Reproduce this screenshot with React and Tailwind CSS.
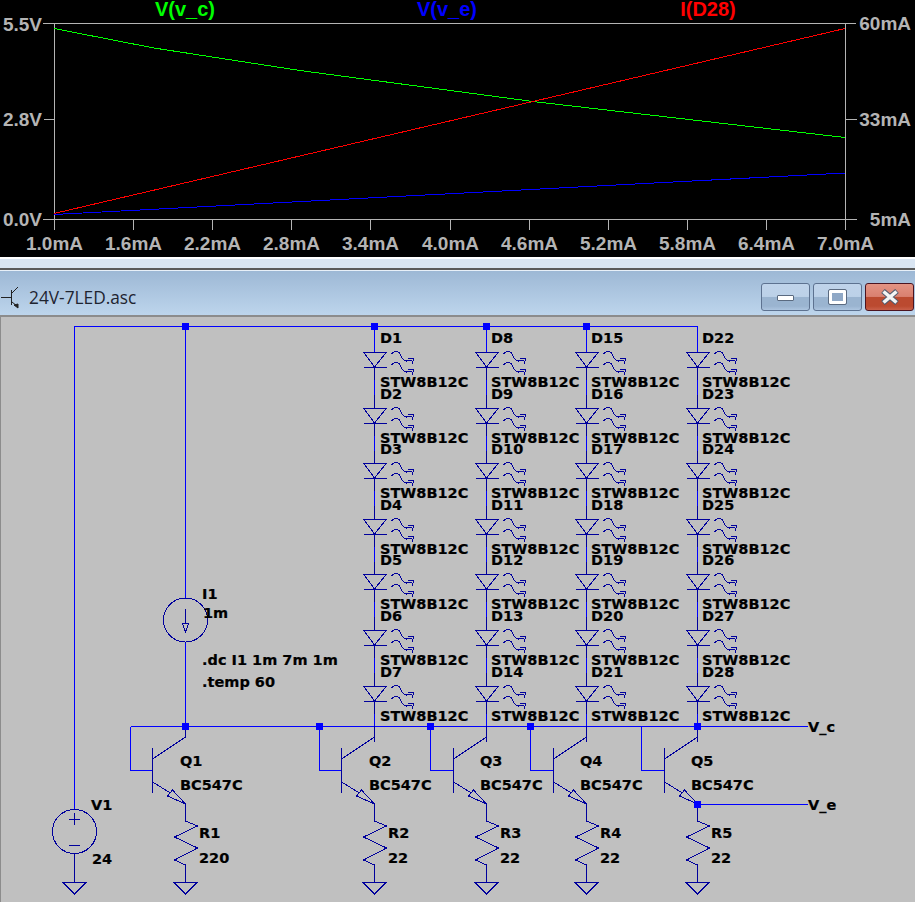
import React from "react";

const W = "#0000ff";
const C = "#00009c";
const G = "#b4b4b4";

const xLabels = ["1.0mA","1.6mA","2.2mA","2.8mA","3.4mA","4.0mA","4.6mA","5.2mA","5.8mA","6.4mA","7.0mA"];
const cols = [374.5, 486.5, 586.5, 697.5];
const colLabelX = [380, 491, 591, 702];
const dStep = 55.6;
const transistors = [
  { n: "Q1", r: "R1", v: "220", x: 185.5, base: 130.5, lx: 180 },
  { n: "Q2", r: "R2", v: "22", x: 374.5, base: 319.5, lx: 369 },
  { n: "Q3", r: "R3", v: "22", x: 486.5, base: 430.5, lx: 480 },
  { n: "Q4", r: "R4", v: "22", x: 586.5, base: 530.5, lx: 580 },
  { n: "Q5", r: "R5", v: "22", x: 697.5, base: 641.5, lx: 691 },
];
const nodes = [
  [185.5, 326.5], [374.5, 326.5], [486.5, 326.5], [586.5, 326.5],
  [185.5, 726.5], [319.5, 726.5], [430.5, 726.5], [530.5, 726.5], [697.5, 726.5], [697.5, 804.5],
];

function PlotLabel({ x, y, align, color, big, children }) {
  const t = align === "c" ? "-50%" : align === "r" ? "-100%" : "0";
  return (
    <span
      className={
        "absolute whitespace-nowrap font-bold font-['Liberation_Sans',Arial,sans-serif] " +
        (big ? "text-[20px] leading-[18px]" : "text-[19px] leading-none")
      }
      style={{ left: x, top: y, transform: `translate(${t},-50%)`, color }}
    >
      {children}
    </span>
  );
}

function Plot() {
  const ticks = xLabels.map((_, i) => Math.round(54 + i * 79.1) + 0.5);
  return (
    <div className="relative h-[257px] bg-black overflow-hidden">
      <svg className="absolute inset-0" width="915" height="257" viewBox="0 0 915 257">
        <g stroke={G} strokeWidth="1" shapeRendering="crispEdges" fill="none">
          <path d="M43 23.5H856M43 219.5H857M44 119.5H54M845 119.5H857" />
          <path d="M54.5 23V230M845.5 23V230" />
          {ticks.slice(1, -1).map((x) => (
            <path key={x} d={`M${x} 219V230`} />
          ))}
        </g>
        <g shapeRendering="crispEdges" fill="none" strokeWidth="1">
          <polyline points="54,28.5 154,48 300,70.5 533,101.5 845,137.5" stroke="#00ff00" />
          <polyline points="54,214.5 845,173" stroke="#0000ff" />
          <polyline points="54,213.5 845,28.5" stroke="#ff0000" />
        </g>
      </svg>
      <PlotLabel big x={185} y={9} align="c" color="#00ff00">V(v_c)</PlotLabel>
      <PlotLabel big x={447} y={9} align="c" color="#0000ff">V(v_e)</PlotLabel>
      <PlotLabel big x={708} y={9} align="c" color="#ff0000">I(D28)</PlotLabel>
      <PlotLabel x={42} y={24} align="r" color={G}>5.5V</PlotLabel>
      <PlotLabel x={42} y={119} align="r" color={G}>2.8V</PlotLabel>
      <PlotLabel x={42} y={219} align="r" color={G}>0.0V</PlotLabel>
      <PlotLabel x={911} y={23} align="r" color={G}>60mA</PlotLabel>
      <PlotLabel x={911} y={119} align="r" color={G}>33mA</PlotLabel>
      <PlotLabel x={911} y={219} align="r" color={G}>5mA</PlotLabel>
      {xLabels.map((t, i) => (
        <PlotLabel key={t} x={ticks[i]} y={243} align="c" color={G}>{t}</PlotLabel>
      ))}
    </div>
  );
}

function WinButton({ kind }) {
  const close = kind === "close";
  return (
    <div
      className={
        "w-[49px] h-[28px] rounded-[3px] border flex items-center justify-center " +
        (close
          ? "border-[#4b1420] bg-[linear-gradient(#e39383_0%,#d98070_48%,#bb4a30_50%,#bb4a30_85%,#c9604a_100%)]"
          : "border-[#5d7290] bg-[linear-gradient(#bfd3ea_0%,#bcd1e8_48%,#9ab4d0_50%,#9ab4d0_85%,#adc5e0_100%)]")
      }
    >
      {kind === "min" && (
        <div className="w-[17px] h-[6px] mt-[2px] bg-white border border-[#5a6a80] rounded-[1px]" />
      )}
      {kind === "max" && (
        <div className="w-[17px] h-[14px] bg-[#8fa8c6] border-[3px] border-white outline outline-1 outline-[#5a6a80] rounded-[1px]" />
      )}
      {close && (
        <svg width="20" height="16" viewBox="0 0 20 16">
          <path d="M3 2L17 14M17 2L3 14" stroke="#4e5a6e" strokeWidth="5.5" />
          <path d="M3.5 2.5L16.5 13.5M16.5 2.5L3.5 13.5" stroke="#f4f4f4" strokeWidth="3.6" />
        </svg>
      )}
    </div>
  );
}

function TitleBar() {
  return (
    <div className="h-[44px] pt-[8px] flex items-center justify-between pr-[1px] bg-[linear-gradient(#9db8d5,#bdd5ec)]">
      <div className="flex items-center">
        <svg className="shrink-0" width="19" height="24" viewBox="0 0 19 24" fill="none" stroke="#222222" strokeWidth="1">
          <path d="M1 12.5H11M11.5 5V20M12 8L18 2M12 17L17 21" />
          <path d="M14 20L18 19L18 23Z" fill="#222222" />
        </svg>
        <span className="ml-[10px] mt-[1px] text-[#1e2430] text-[17.3px] leading-none font-['Open_Sans',sans-serif]">24V-7LED.asc</span>
      </div>
      <div className="flex gap-[3px]">
        <WinButton kind="min" />
        <WinButton kind="max" />
        <WinButton kind="close" />
      </div>
    </div>
  );
}

function Diode({ x, y }) {
  const l = x - 11;
  const r = x + 12;
  return (
    <g fill="none" stroke={C} strokeWidth="1">
      <path d={`M${l} ${y}H${r}L${x} ${y + 15}Z`} />
      <path d={`M${l} ${y + 15.5}H${r}`} />
      <path d={`M${x + 17} ${y + 2}c2 -3 6 -3 8 -1c2 2 2 8 7 8l6 -1M${x + 34} ${y + 6}l5 1l-1 5`} />
      <path d={`M${x + 17} ${y + 13}c2 -3 6 -3 8 -1c2 2 2 8 7 8l6 -1M${x + 34} ${y + 17}l5 1l-1 5`} />
    </g>
  );
}

function Ground({ x, y }) {
  return <path d={`M${x - 12} ${y}H${x + 12}L${x} ${y + 12}Z`} fill="none" stroke={C} strokeWidth="1" />;
}

function Transistor({ x, base }) {
  const b = x - 33;
  return (
    <g fill="none">
      <path d={`M${base} 726.5V770.5H${b}`} stroke={W} strokeWidth="1" />
      <g stroke={C} strokeWidth="1">
        <path d={`M${b} 748V793M${b} 759L${x} 737V726M${b} 782L${x - 15} 793M${x} 804V821`} />
        <path d={`M${x} 804L${x - 18} 796L${x - 13} 790Z`} />
        <path d={`M${x} 821L${x + 12} 826L${x - 11} 837L${x + 12} 848L${x - 11} 860L${x} 865V882`} />
      </g>
      <Ground x={x} y={882} />
    </g>
  );
}

function Schematic() {
  const labels = [
    { t: "V1", x: 91, y: 805 },
    { t: "24", x: 92, y: 859 },
    { t: "I1", x: 202, y: 594 },
    { t: "1m", x: 203, y: 613 },
    { t: ".dc I1 1m 7m 1m", x: 202, y: 660 },
    { t: ".temp 60", x: 202, y: 682 },
    { t: "V_c", x: 808, y: 727 },
    { t: "V_e", x: 808, y: 805 },
  ];
  transistors.forEach((q) => {
    labels.push({ t: q.n, x: q.lx, y: 761 });
    labels.push({ t: "BC547C", x: q.lx, y: 785 });
    labels.push({ t: q.r, x: q.x + 13.5, y: 833 });
    labels.push({ t: q.v, x: q.x + 13.5, y: 858 });
  });
  colLabelX.forEach((x, c) => {
    for (let k = 0; k < 7; k++) {
      labels.push({ t: "D" + (c * 7 + k + 1), x, y: 338 + k * dStep });
      labels.push({ t: "STW8B12C", x, y: 382 + k * dStep });
    }
  });
  return (
    <div className="relative flex-1 bg-[#c0c0c0] border-t-2 border-l border-[#8c8c8c] overflow-hidden">
      <svg className="absolute left-[-1px] top-[-2px]" width="915" height="587" viewBox="0 315 915 587" shapeRendering="crispEdges">
        <g fill="none" stroke={W} strokeWidth="1">
          <path d="M74.5 809V326.5H697.5" />
          <path d="M185.5 326.5V598M185.5 642V726.5" />
          <path d="M130.5 726.5H808M697.5 804.5H808" />
        </g>
        {cols.map((x) => (
          <g key={x}>
            <path d={`M${x} 326V352`} stroke={W} fill="none" />
            {[0, 1, 2, 3, 4, 5, 6].map((k) => {
              const y = Math.round(352 + k * dStep);
              return (
                <g key={k}>
                  <Diode x={x} y={y} />
                  <path d={`M${x} ${y + 15}V${y + 28}`} stroke={C} fill="none" />
                  <path d={`M${x} ${y + 28}V${y + 43}`} stroke={W} fill="none" />
                  <path d={`M${x} ${y + 43}V${y + 56}`} stroke={C} fill="none" />
                </g>
              );
            })}
          </g>
        ))}
        <g fill="none" stroke={C} strokeWidth="1">
          <circle cx="74.5" cy="831.5" r="22" />
          <path d="M74.5 813V825M69 819H80M69 845H80M74.5 854V882" />
          <Ground x={74.5} y={882} />
          <circle cx="185.5" cy="620" r="22" />
          <path d="M185.5 609V623M182.5 623.5H188.5L185.5 632Z" />
        </g>
        {transistors.map((q) => (
          <Transistor key={q.n} x={q.x} base={q.base} />
        ))}
        {nodes.map(([x, y]) => (
          <rect key={x + "-" + y} x={x - 3.5} y={y - 3.5} width="7" height="7" fill={W} />
        ))}
      </svg>
      {labels.map((l) => (
        <span
          key={l.t + l.x + l.y}
          className="absolute whitespace-nowrap text-black font-bold text-[14.5px] leading-none [-webkit-text-stroke:0.2px_#000000] font-['DejaVu_Sans',Verdana,sans-serif]"
          style={{ left: l.x - 1, top: l.y - 317, transform: "translateY(-50%)" }}
        >
          {l.t}
        </span>
      ))}
    </div>
  );
}

export default function App() {
  return (
    <div className="w-[915px] h-[902px] flex flex-col overflow-hidden bg-[#c0c0c0]">
      <Plot />
      <div className="h-[2px] bg-white" />
      <div className="h-[9px] bg-[#d9e5f2]" />
      <div className="h-[2px] bg-[#5a5a5a]" />
      <div className="h-[1px] bg-[#e8f0f8]" />
      <TitleBar />
      <Schematic />
    </div>
  );
}
